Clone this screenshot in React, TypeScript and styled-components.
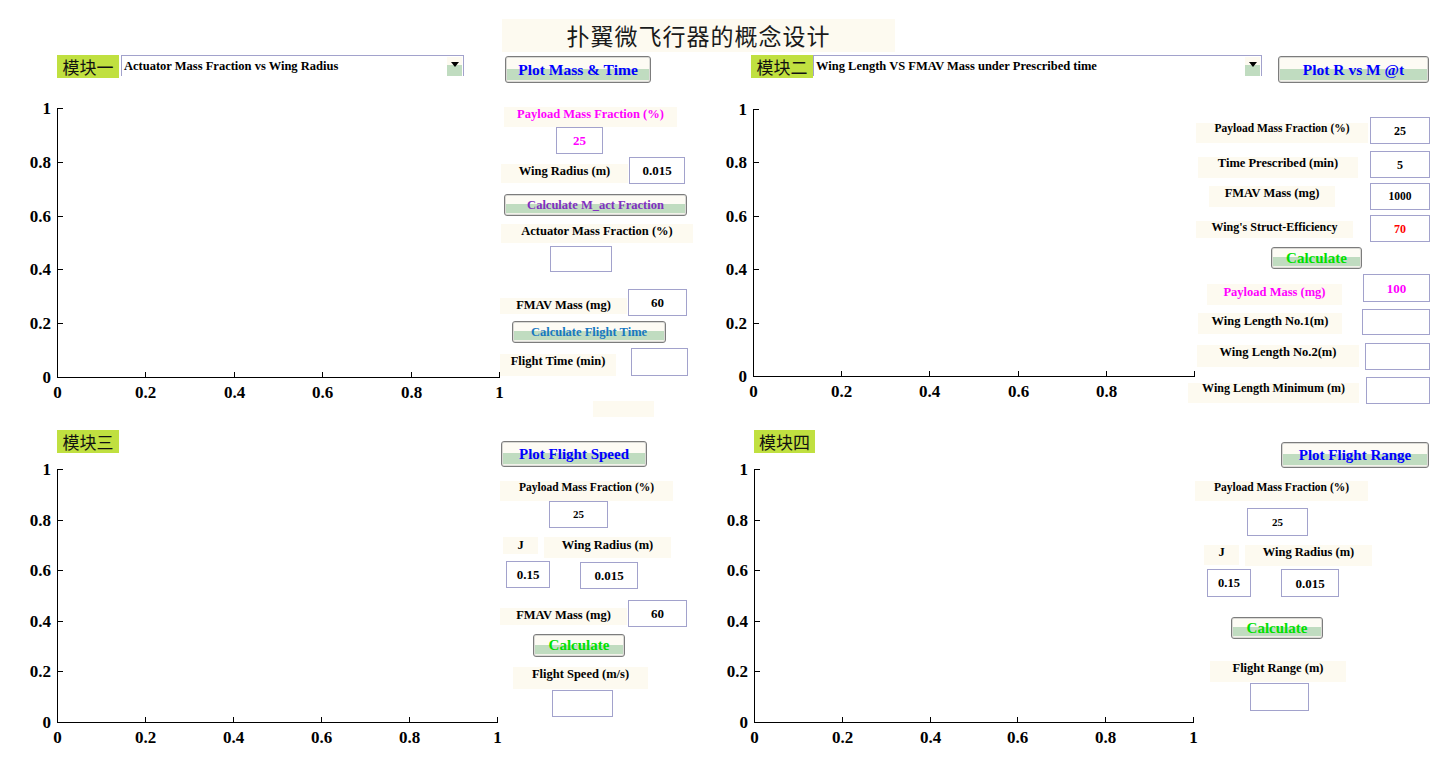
import React from "react";
import styled, { createGlobalStyle } from "styled-components";

const CREAM = "#fdfaf0";
const BTN_GREEN = "#c0dcc0";
const TAG_GREEN = "#c0e040";
const EDGE = "#a2a2cc";
const SERIF = `"Liberation Serif", "Times New Roman", serif`;
const CJK = `"Noto Sans CJK SC", "Noto Sans", sans-serif`;

const GlobalStyle = createGlobalStyle`
  html, body { margin: 0; padding: 0; background: #fff; }
  body { font-family: ${SERIF}; }
`;

const Page = styled.div`
  width: 1432px;
  height: 767px;
  overflow: hidden;
  background: #fff;
  font-family: ${SERIF};
  color: #000;
`;

const TitleRow = styled.div`
  height: 52px;
  box-sizing: border-box;
  padding: 19px 0 0 502px;
`;

const Title = styled.h1`
  margin: 0;
  width: 393px;
  height: 33px;
  background: ${CREAM};
  font: 400 23px/33px ${CJK};
  letter-spacing: 1px;
  text-align: center;
  color: #1a1a1a;
`;

const QuadRow = styled.div<{ $h: number }>`
  display: flex;
  height: ${(p) => p.$h}px;
`;

const Quad = styled.section<{ $w: number }>`
  flex: none;
  width: ${(p) => p.$w}px;
  display: flex;
  flex-direction: column;
`;

const QuadHeader = styled.div`
  display: flex;
  align-items: flex-start;
  margin-top: 3px;
`;

const QuadBody = styled.div`
  display: flex;
  align-items: flex-start;
`;

const ModuleTag = styled.div<{ $ml: number; $w: number }>`
  flex: none;
  margin-left: ${(p) => p.$ml}px;
  width: ${(p) => p.$w}px;
  height: 23px;
  background: ${TAG_GREEN};
  font: 400 17px/23px ${CJK};
  text-align: center;
  color: #111;
`;

const Dropdown = styled.div<{ $ml: number; $w: number }>`
  flex: none;
  box-sizing: border-box;
  margin-left: ${(p) => p.$ml}px;
  width: ${(p) => p.$w}px;
  height: 21px;
  border: 1px solid ${EDGE};
  border-bottom: none;
  background: #fff;
  display: flex;
  align-items: center;
  justify-content: space-between;
  padding-left: 2px;
  font: 700 12.5px/1 ${SERIF};
  white-space: nowrap;
`;

const DropArrow = styled.span`
  flex: none;
  width: 15px;
  height: 19px;
  margin-right: 1px;
  margin-top: 1px;
  display: flex;
  align-items: center;
  justify-content: center;
  background: linear-gradient(to bottom, ${CREAM} 0%, ${CREAM} 42%, ${BTN_GREEN} 42%, ${BTN_GREEN} 100%);
  &::after {
    content: "";
    border-left: 4px solid transparent;
    border-right: 4px solid transparent;
    border-top: 5px solid #000;
    margin-bottom: 4px;
  }
`;

type BoxProps = {
  $w: number;
  $h: number;
  $ml?: number;
  $mt?: number;
  $fs?: number;
  $color?: string;
};

const PushButton = styled.button<BoxProps>`
  flex: none;
  box-sizing: border-box;
  margin: ${(p) => p.$mt ?? 0}px 0 0 ${(p) => p.$ml ?? 0}px;
  width: ${(p) => p.$w}px;
  height: ${(p) => p.$h}px;
  padding: 0;
  border: 1px solid #7c7c7c;
  border-radius: 3px;
  box-shadow: inset 0 0 0 1px #dadad6;
  background: linear-gradient(
    to bottom,
    #fdfbf4 0%,
    #fdfbf4 47%,
    ${BTN_GREEN} 47%,
    ${BTN_GREEN} 91%,
    #f2f2ea 91%
  );
  color: ${(p) => p.$color ?? "#0000ff"};
  font: 700 ${(p) => p.$fs ?? 15}px/1 ${SERIF};
  white-space: nowrap;
  cursor: default;
`;

const Controls = styled.div<{ $w: number }>`
  flex: none;
  width: ${(p) => p.$w}px;
  display: flex;
  flex-direction: column;
  align-items: flex-start;
`;

const Row = styled.div<{ $mt?: number; $ml?: number }>`
  display: flex;
  align-items: flex-start;
  margin-top: ${(p) => p.$mt ?? 0}px;
  margin-left: ${(p) => p.$ml ?? 0}px;
`;

const Label = styled.div<BoxProps & { $c?: number }>`
  flex: none;
  margin: ${(p) => p.$mt ?? 0}px 0 0 ${(p) => p.$ml ?? 0}px;
  width: ${(p) => p.$w}px;
  height: ${(p) => p.$h}px;
  background: ${CREAM};
  color: ${(p) => p.$color ?? "#000"};
  font: 700 ${(p) => p.$fs ?? 12.5}px/${(p) => 2 * (p.$c ?? 7)}px ${SERIF};
  text-align: center;
  white-space: nowrap;
`;

const Edit = styled.div<BoxProps>`
  flex: none;
  box-sizing: border-box;
  margin: ${(p) => p.$mt ?? 0}px 0 0 ${(p) => p.$ml ?? 0}px;
  width: ${(p) => p.$w}px;
  height: ${(p) => p.$h}px;
  border: 1px solid ${EDGE};
  background: #fff;
  display: flex;
  align-items: center;
  justify-content: center;
  color: ${(p) => p.$color ?? "#000"};
  font: 700 ${(p) => p.$fs ?? 12}px/1 ${SERIF};
`;

const AxesSvg = styled.svg`
  display: block;
  flex: none;
  overflow: visible;
  line {
    stroke: #000;
    stroke-width: 1;
    shape-rendering: crispEdges;
  }
  text {
    font: 700 17px ${SERIF};
    fill: #000;
  }
`;

type AxesProps = {
  w: number;
  h: number;
  x0: number;
  x1: number;
  y0: number;
  y1: number;
  hideLastX?: boolean;
};

const TICKS = [0, 0.2, 0.4, 0.6, 0.8, 1];
const TICK_LABELS = ["0", "0.2", "0.4", "0.6", "0.8", "1"];

function Axes({ w, h, x0, x1, y0, y1, hideLastX }: AxesProps) {
  return (
    <AxesSvg width={w} height={h} viewBox={`0 0 ${w} ${h}`}>
      <line x1={x0 + 0.5} y1={y0} x2={x0 + 0.5} y2={y1 + 1} />
      <line x1={x0} y1={y1 + 0.5} x2={x1 + 1} y2={y1 + 0.5} />
      {TICKS.map((t, i) => {
        const xi = Math.round(x0 + t * (x1 - x0));
        const yi = Math.round(y1 - t * (y1 - y0));
        return (
          <g key={i}>
            <line x1={xi + 0.5} y1={y1} x2={xi + 0.5} y2={y1 - 5} />
            <line x1={x0} y1={yi + 0.5} x2={x0 + 6} y2={yi + 0.5} />
            {!(hideLastX && i === TICKS.length - 1) && (
              <text x={xi + 0.5} y={y1 + 15} textAnchor="middle" dominantBaseline="central">
                {TICK_LABELS[i]}
              </text>
            )}
            <text x={x0 - 6} y={yi + 0.5} textAnchor="end" dominantBaseline="central">
              {TICK_LABELS[i]}
            </text>
          </g>
        );
      })}
    </AxesSvg>
  );
}

const MAGENTA = "#ff00ff";
const GREEN = "#00e000";

export default function App() {
  return (
    <Page>
      <GlobalStyle />
      <TitleRow>
        <Title>扑翼微飞行器的概念设计</Title>
      </TitleRow>

      <QuadRow $h={375}>
        {/* 模块一 */}
        <Quad $w={700}>
          <QuadHeader>
            <ModuleTag $ml={57} $w={62}>模块一</ModuleTag>
            <Dropdown $ml={2} $w={343}>
              <span>Actuator Mass Fraction vs Wing Radius</span>
              <DropArrow />
            </Dropdown>
            <PushButton $ml={41} $mt={1} $w={146} $h={27} $fs={15.5}>
              Plot Mass &amp; Time
            </PushButton>
          </QuadHeader>
          <QuadBody>
            <Axes w={500} h={330} x0={57} x1={499} y0={25} y1={294} />
            <Controls $w={200}>
              <Row $mt={24} $ml={4}>
                <Label $w={173} $h={20} $c={7} $color={MAGENTA}>Payload Mass Fraction (%)</Label>
              </Row>
              <Row $ml={56}>
                <Edit $w={47} $h={27} $fs={13} $color={MAGENTA}>25</Edit>
              </Row>
              <Row $mt={3} $ml={1}>
                <Label $w={127} $h={19} $mt={7} $c={7}>Wing Radius (m)</Label>
                <Edit $ml={1} $w={56} $h={27} $fs={13}>0.015</Edit>
              </Row>
              <Row $mt={10} $ml={4}>
                <PushButton $w={183} $h={22} $fs={12.5} $color="#8030c0">Calculate M_act Fraction</PushButton>
              </Row>
              <Row $mt={8} $ml={1}>
                <Label $w={192} $h={19} $c={7}>Actuator Mass Fraction (%)</Label>
              </Row>
              <Row $mt={3} $ml={50}>
                <Edit $w={62} $h={26} />
              </Row>
              <Row $mt={17}>
                <Label $w={127} $h={16} $mt={9} $c={7}>FMAV Mass (mg)</Label>
                <Edit $ml={1} $w={59} $h={27} $fs={13}>60</Edit>
              </Row>
              <Row $mt={5} $ml={12}>
                <PushButton $w={154} $h={22} $fs={12.5} $color="#1878c0">Calculate Flight Time</PushButton>
              </Row>
              <Row $mt={5}>
                <Label $w={116} $h={22} $mt={6} $c={7}>Flight Time (min)</Label>
                <Edit $ml={15} $w={57} $h={28} />
              </Row>
              <Row $mt={25} $ml={93}>
                <Label $w={61} $h={16} />
              </Row>
            </Controls>
          </QuadBody>
        </Quad>

        {/* 模块二 */}
        <Quad $w={732}>
          <QuadHeader>
            <ModuleTag $ml={51} $w={62}>模块二</ModuleTag>
            <Dropdown $ml={0} $w={449}>
              <span>Wing Length VS FMAV Mass under Prescribed time</span>
              <DropArrow />
            </Dropdown>
            <PushButton $ml={16} $mt={1} $w={151} $h={27} $fs={15.5}>
              Plot R vs M @t
            </PushButton>
          </QuadHeader>
          <QuadBody>
            <Axes w={488} h={330} x0={53} x1={494} y0={26} y1={293} hideLastX />
            <Controls $w={244}>
              <Row $mt={34} $ml={8}>
                <Label $w={172} $h={20} $mt={6} $c={5} $fs={11.5}>Payload Mass Fraction (%)</Label>
                <Edit $ml={2} $w={60} $h={27}>25</Edit>
              </Row>
              <Row $mt={7} $ml={10}>
                <Label $w={160} $h={21} $mt={6} $c={6}>Time Prescribed (min)</Label>
                <Edit $ml={12} $w={60} $h={27}>5</Edit>
              </Row>
              <Row $mt={5} $ml={21}>
                <Label $w={126} $h={21} $mt={3} $c={7}>FMAV Mass (mg)</Label>
                <Edit $ml={35} $w={60} $h={27} $fs={11.5}>1000</Edit>
              </Row>
              <Row $mt={5} $ml={8}>
                <Label $w={157} $h={17} $mt={6} $c={6} $fs={12}>Wing&apos;s Struct-Efficiency</Label>
                <Edit $ml={17} $w={60} $h={27} $color="#ff0000">70</Edit>
              </Row>
              <Row $mt={5} $ml={83}>
                <PushButton $w={91} $h={22} $fs={15} $color={GREEN}>Calculate</PushButton>
              </Row>
              <Row $mt={5} $ml={19}>
                <Label $w={135} $h={21} $mt={10} $c={8} $color={MAGENTA}>Payload Mass (mg)</Label>
                <Edit $ml={21} $w={67} $h={28} $fs={13} $color={MAGENTA}>100</Edit>
              </Row>
              <Row $mt={4} $ml={10}>
                <Label $w={144} $h={21} $mt={4} $c={8}>Wing Length No.1(m)</Label>
                <Edit $ml={20} $w={68} $h={26} />
              </Row>
              <Row $mt={8} $ml={9}>
                <Label $w={162} $h={22} $mt={2} $c={7}>Wing Length No.2(m)</Label>
                <Edit $ml={6} $w={65} $h={27} />
              </Row>
              <Row $mt={7}>
                <Label $w={171} $h={20} $mt={6} $c={5} $fs={12}>Wing Length Minimum (m)</Label>
                <Edit $ml={7} $w={64} $h={27} />
              </Row>
            </Controls>
          </QuadBody>
        </Quad>
      </QuadRow>

      <QuadRow $h={340}>
        {/* 模块三 */}
        <Quad $w={700}>
          <QuadHeader>
            <ModuleTag $ml={57} $w={62}>模块三</ModuleTag>
            <PushButton $ml={382} $mt={11} $w={146} $h={26} $fs={15}>
              Plot Flight Speed
            </PushButton>
          </QuadHeader>
          <QuadBody>
            <Axes w={500} h={280} x0={57} x1={497} y0={2} y1={255} />
            <Controls $w={200}>
              <Row $mt={14}>
                <Label $w={173} $h={20} $c={6} $fs={11.5}>Payload Mass Fraction (%)</Label>
              </Row>
              <Row $ml={49}>
                <Edit $w={59} $h={27} $fs={11}>25</Edit>
              </Row>
              <Row $mt={9}>
                <Label $ml={3} $w={35} $h={17} $c={8}>J</Label>
                <Label $ml={6} $w={127} $h={21} $c={8}>Wing Radius (m)</Label>
              </Row>
              <Row $mt={3}>
                <Edit $ml={6} $w={44} $h={27} $fs={13}>0.15</Edit>
                <Edit $ml={30} $mt={1} $w={58} $h={27} $fs={13}>0.015</Edit>
              </Row>
              <Row $mt={11}>
                <Label $w={127} $h={17} $mt={8} $c={7}>FMAV Mass (mg)</Label>
                <Edit $ml={1} $w={59} $h={27} $fs={13}>60</Edit>
              </Row>
              <Row $mt={7} $ml={33}>
                <PushButton $w={92} $h={23} $fs={15} $color={GREEN}>Calculate</PushButton>
              </Row>
              <Row $mt={10} $ml={13}>
                <Label $w={135} $h={22} $c={7}>Flight Speed (m/s)</Label>
              </Row>
              <Row $mt={1} $ml={52}>
                <Edit $w={61} $h={27} />
              </Row>
            </Controls>
          </QuadBody>
        </Quad>

        {/* 模块四 */}
        <Quad $w={732}>
          <QuadHeader>
            <ModuleTag $ml={54} $w={61}>模块四</ModuleTag>
            <PushButton $ml={466} $mt={12} $w={148} $h={26} $fs={15}>
              Plot Flight Range
            </PushButton>
          </QuadHeader>
          <QuadBody>
            <Axes w={488} h={280} x0={54} x1={493} y0={1} y1={254} />
            <Controls $w={244}>
              <Row $mt={13} $ml={7}>
                <Label $w={173} $h={20} $c={6} $fs={11.5}>Payload Mass Fraction (%)</Label>
              </Row>
              <Row $mt={7} $ml={59}>
                <Edit $w={61} $h={28} $fs={11}>25</Edit>
              </Row>
              <Row $mt={9}>
                <Label $ml={16} $w={35} $h={20} $c={7}>J</Label>
                <Label $ml={6} $w={127} $h={21} $c={7}>Wing Radius (m)</Label>
              </Row>
              <Row $mt={3}>
                <Edit $ml={19} $w={44} $h={28} $fs={12.5}>0.15</Edit>
                <Edit $ml={30} $w={58} $h={28} $fs={13}>0.015</Edit>
              </Row>
              <Row $mt={20} $ml={43}>
                <PushButton $w={92} $h={22} $fs={15} $color={GREEN}>Calculate</PushButton>
              </Row>
              <Row $mt={22} $ml={22}>
                <Label $w={136} $h={21} $c={7}>Flight Range (m)</Label>
              </Row>
              <Row $mt={1} $ml={62}>
                <Edit $w={59} $h={28} />
              </Row>
            </Controls>
          </QuadBody>
        </Quad>
      </QuadRow>
    </Page>
  );
}
